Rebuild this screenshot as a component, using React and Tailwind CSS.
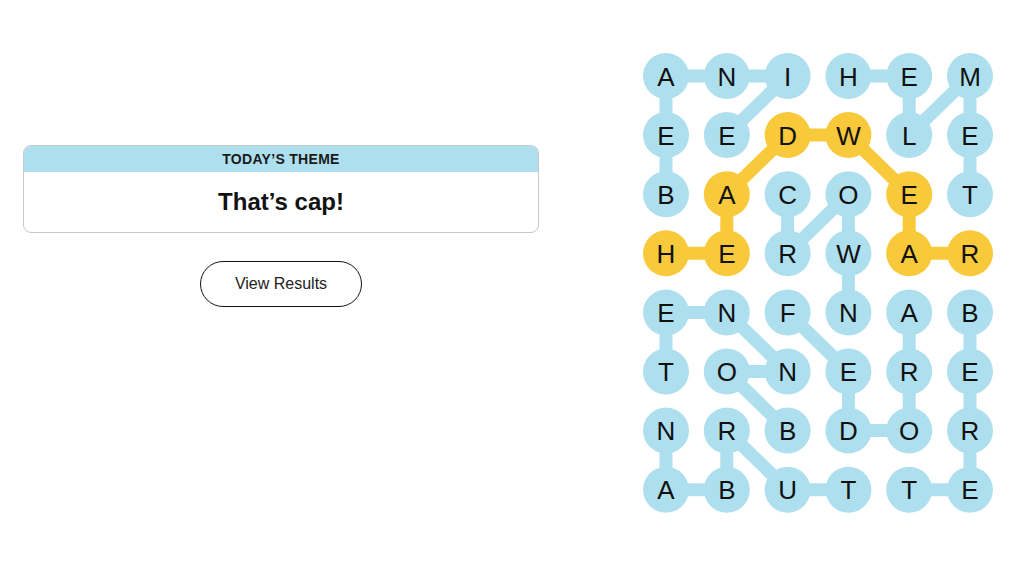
const letters = [
  "ANIHEM",
  "EEDWLE",
  "BACOET",
  "HERWAR",
  "ENFNAB",
  "TONERE",
  "NRBDOR",
  "ABUTTE",
];

// [r1, c1, r2, c2]
const blueLinks = [
  [0, 0, 0, 1], [0, 1, 0, 2], [0, 2, 1, 1], [0, 0, 1, 0], [1, 0, 2, 0],
  [0, 3, 0, 4], [0, 4, 1, 4], [1, 4, 0, 5], [0, 5, 1, 5], [1, 5, 2, 5],
  [2, 2, 3, 2], [3, 2, 2, 3], [2, 3, 3, 3], [3, 3, 4, 3],
  [4, 0, 4, 1], [4, 0, 5, 0], [4, 1, 5, 2], [5, 2, 5, 1], [5, 1, 6, 2],
  [4, 2, 5, 3], [5, 3, 6, 3], [6, 3, 6, 4], [6, 4, 5, 4], [5, 4, 4, 4],
  [4, 5, 5, 5], [5, 5, 6, 5], [6, 5, 7, 5], [7, 5, 7, 4],
  [6, 0, 7, 0], [7, 0, 7, 1], [7, 1, 6, 1], [6, 1, 7, 2], [7, 2, 7, 3],
];

const yellowLinks = [
  [3, 0, 3, 1], [3, 1, 2, 1], [2, 1, 1, 2], [1, 2, 1, 3],
  [1, 3, 2, 4], [2, 4, 3, 4], [3, 4, 3, 5],
];

const spangram = new Set(["3-0", "3-1", "2-1", "1-2", "1-3", "2-4", "3-4", "3-5"]);

const BLUE = "#aedfee";
const YELLOW = "#f8c93a";

const cx = (c) => 26 + c * 60.8;
const cy = (r) => 26 + r * 59.1;

function Board() {
  return (
    <svg width="360" height="470" viewBox="0 0 360 470" className="block">
      {blueLinks.map(([r1, c1, r2, c2], i) => (
        <line key={"b" + i} x1={cx(c1)} y1={cy(r1)} x2={cx(c2)} y2={cy(r2)} stroke={BLUE} strokeWidth="13" />
      ))}
      {yellowLinks.map(([r1, c1, r2, c2], i) => (
        <line key={"y" + i} x1={cx(c1)} y1={cy(r1)} x2={cx(c2)} y2={cy(r2)} stroke={YELLOW} strokeWidth="13" />
      ))}
      {letters.map((row, r) =>
        row.split("").map((ch, c) => (
          <g key={r + "-" + c}>
            <circle cx={cx(c)} cy={cy(r)} r="23" fill={spangram.has(r + "-" + c) ? YELLOW : BLUE} />
            <text
              x={cx(c)}
              y={cy(r) + 9.5}
              textAnchor="middle"
              fontSize="26"
              fill="#111"
              style={{ fontFamily: '"Liberation Sans", Arial, sans-serif' }}
            >
              {ch}
            </text>
          </g>
        ))
      )}
    </svg>
  );
}

export default function App() {
  return (
    <div className="w-[1024px] h-[562px] bg-white flex font-['Liberation_Sans',Arial,sans-serif] text-[#121212]">
      {/* Left: theme card */}
      <div className="w-[516px] ml-[23px] pt-[145px] flex flex-col items-center">
        <div className="w-full rounded-lg border border-[#c8c8c8] overflow-hidden">
          <div className="bg-[#aedfee] h-[26px] flex items-center justify-center text-[14px] font-semibold tracking-[0.3px] text-[#1a1a1a]">
            TODAY’S THEME
          </div>
          <div className="h-[60px] flex items-center justify-center text-[24px] font-bold">
            That’s cap!
          </div>
        </div>
        <button className="mt-[28px] w-[162px] h-[46px] rounded-full border border-[#121212] text-[16px] text-[#222] bg-white">
          View Results
        </button>
      </div>

      {/* Right: letter board */}
      <div className="ml-[101px] pt-[50px]">
        <Board />
      </div>
    </div>
  );
}
